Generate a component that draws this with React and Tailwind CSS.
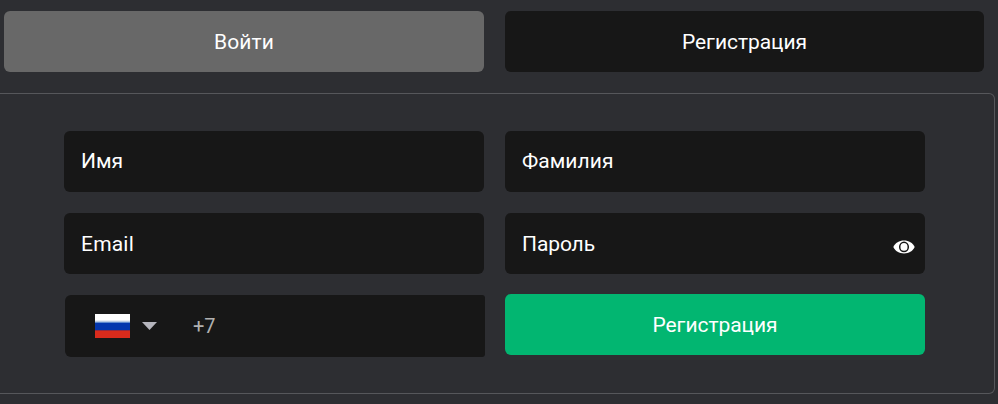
import React from "react";

const field =
  "flex h-[61px] items-center rounded-[6px] bg-[#171717] pl-[17px] text-[21px] leading-[24px] text-white";

function Label({ children, className = "" }) {
  return <span className={`whitespace-nowrap ${className}`}>{children}</span>;
}

function EyeIcon() {
  return (
    <svg className="h-[14px] w-[22px]" viewBox="0 0 22 14" fill="none">
      <path d="M0.3 7C2.3 2.6 6.2.4 11 .4S19.7 2.6 21.7 7C19.7 11.4 15.8 13.4 11 13.4S2.3 11.4 .3 7Z" fill="#fff" />
      <ellipse cx="11" cy="6.9" rx="4.3" ry="4.6" fill="#fff" stroke="#171717" strokeWidth="1.5" />
    </svg>
  );
}

function Flag() {
  return (
    <span className="flex h-[24px] w-[35px] flex-col">
      <span className="h-[6px] bg-white" />
      <span className="h-px bg-[#e9edf4]" />
      <span className="h-px bg-[#b9c9e4]" />
      <span className="h-px bg-[#5e89cf]" />
      <span className="h-[7px] bg-[#0436ad]" />
      <span className="h-px bg-[#96293f]" />
      <span className="h-[7px] bg-[#d92b1c]" />
    </span>
  );
}

export default function App() {
  return (
    <div className="h-[404px] w-[998px] overflow-hidden bg-[#2d2e32] pt-[11px] font-['Roboto','Noto_Sans',sans-serif] font-normal">
      <div className="flex gap-[21px] pl-[4px]">
        <button className="flex h-[61px] w-[480px] items-center justify-center rounded-[6px] bg-[#686868] pt-[2px] text-[21px] text-white">
          <Label className="tracking-[0.1px]">Войти</Label>
        </button>
        <button className="flex h-[61px] w-[479px] items-center justify-center rounded-[6px] bg-[#171717] pt-[2px] text-[21px] text-white">
          <Label className="-tracking-[0.05px]">Регистрация</Label>
        </button>
      </div>
      <div className="mt-[21px] h-[301px] w-[995px] rounded-r-[6px] border border-l-0 border-[#56575b] pl-[64px] pt-[37px]">
        <div className="flex gap-[21px]">
          <div className="flex w-[420px] flex-col gap-[21px]">
            <div className={field}>
              <Label className="-mt-[2px]">Имя</Label>
            </div>
            <div className={field}>
              <Label className="tracking-[0.2px]">Email</Label>
            </div>
            <div className="ml-px flex h-[62px] w-[420px] items-center rounded-l-[6px] rounded-r-[3px] bg-[#171717] pl-[30px]">
              <Flag />
              <svg className="ml-[12px] h-[8px] w-[15px]" viewBox="0 0 15 8">
                <path d="M0 0h15L7.5 8Z" fill="#b5b5bd" />
              </svg>
              <Label className="ml-[36px] text-[20px] font-normal text-[#b0b0b0]">+7</Label>
            </div>
          </div>
          <div className="flex w-[420px] flex-col">
            <div className={field}>
              <Label className="-mt-[2px] tracking-[0.05px]">Фамилия</Label>
            </div>
            <div className={`${field} mt-[21px] justify-between pr-[10px]`}>
              <Label className="-tracking-[0.1px]">Пароль</Label>
              <span className="mt-[6px]">
                <EyeIcon />
              </span>
            </div>
            <button className="mt-[20px] flex h-[61px] items-center justify-center rounded-[6px] bg-[#02b671] pt-[2px] text-[21px] text-white">
              <Label className="-tracking-[0.05px]">Регистрация</Label>
            </button>
          </div>
        </div>
      </div>
    </div>
  );
}
